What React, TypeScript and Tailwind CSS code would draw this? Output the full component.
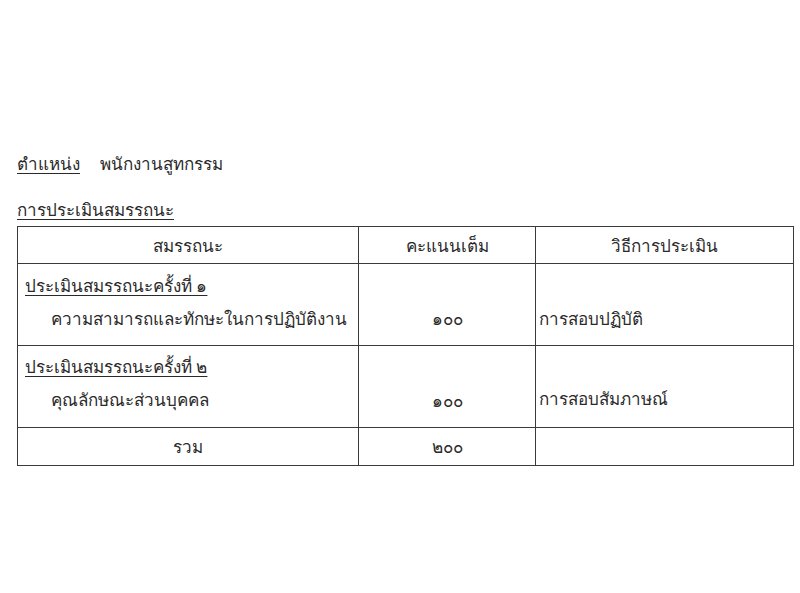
export default function App() {
  const cell = "border-[#3a3a3a]";
  return (
    <div className="w-[800px] h-[593px] bg-white text-[#2a2a2a] font-['Noto_Sans','DejaVu_Sans',sans-serif] text-[17px] leading-none">
      <div className="pt-[155px] pl-[17px]">
        <div className="flex items-baseline">
          <span className="underline underline-offset-[3px] w-[83px]">ตำแหน่ง</span>
          <span>พนักงานสูทกรรม</span>
        </div>
        <div className="mt-[29px] underline underline-offset-[3px]">การประเมินสมรรถนะ</div>
      </div>
      <div className="ml-[17px] mt-[8px] w-[777px] border-[1.5px] border-[#3a3a3a] grid grid-cols-[341px_177px_1fr]">
        <div className={`h-[37px] flex items-center justify-center border-r-[1.5px] border-b-[1.5px] ${cell}`}>สมรรถนะ</div>
        <div className={`h-[37px] flex items-center justify-center border-r-[1.5px] border-b-[1.5px] ${cell}`}>คะแนนเต็ม</div>
        <div className={`h-[37px] flex items-center justify-center border-b-[1.5px] ${cell}`}>วิธีการประเมิน</div>

        <div className={`h-[82px] pl-[7px] pt-[13px] border-r-[1.5px] border-b-[1.5px] ${cell}`}>
          <div className="underline underline-offset-[3px]">ประเมินสมรรถนะครั้งที่ ๑</div>
          <div className="pl-[26px] mt-[16px]">ความสามารถและทักษะในการปฏิบัติงาน</div>
        </div>
        <div className={`h-[82px] flex items-end justify-center pb-[18px] border-r-[1.5px] border-b-[1.5px] ${cell}`}>๑๐๐</div>
        <div className={`h-[82px] flex items-end pl-[3px] pb-[18px] border-b-[1.5px] ${cell}`}>การสอบปฏิบัติ</div>

        <div className={`h-[82px] pl-[7px] pt-[12px] border-r-[1.5px] border-b-[1.5px] ${cell}`}>
          <div className="underline underline-offset-[3px]">ประเมินสมรรถนะครั้งที่ ๒</div>
          <div className="pl-[26px] mt-[16px]">คุณลักษณะส่วนบุคคล</div>
        </div>
        <div className={`h-[82px] flex items-end justify-center pb-[18px] border-r-[1.5px] border-b-[1.5px] ${cell}`}>๑๐๐</div>
        <div className={`h-[82px] flex items-end pl-[3px] pb-[20px] border-b-[1.5px] ${cell}`}>การสอบสัมภาษณ์</div>

        <div className={`h-[37px] flex items-center justify-center border-r-[1.5px] ${cell}`}>รวม</div>
        <div className={`h-[37px] flex items-center justify-center border-r-[1.5px] ${cell}`}>๒๐๐</div>
        <div className="h-[37px]"></div>
      </div>
    </div>
  );
}
